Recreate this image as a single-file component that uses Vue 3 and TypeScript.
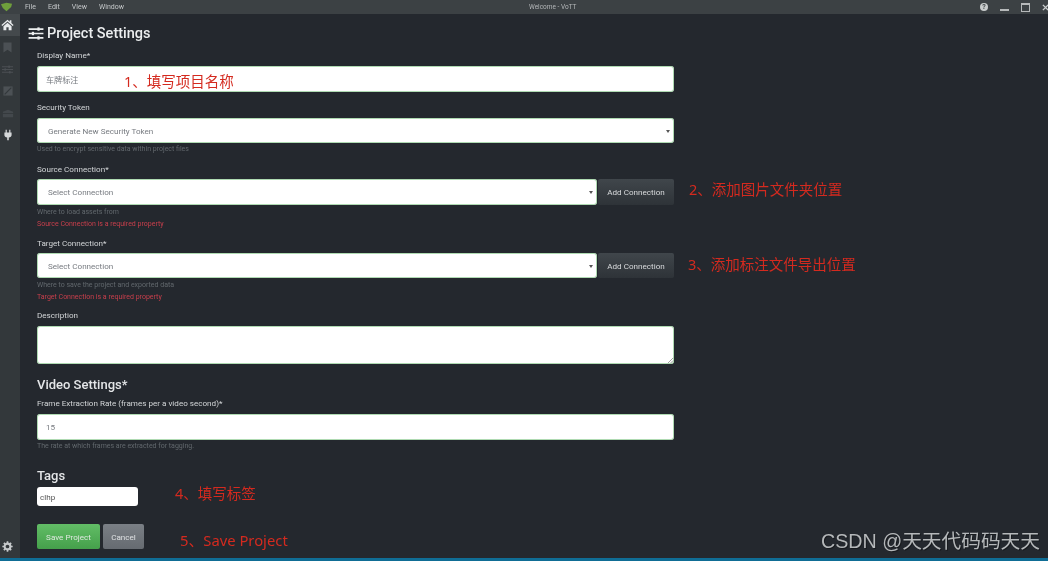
<script setup lang="ts">
const menus = ['File', 'Edit', 'View', 'Window'];

const notes = [
  { text: '1、填写项目名称', left: 124, top: 72, size: 14.5 },
  { text: '2、添加图片文件夹位置', left: 689, top: 180, size: 14.5 },
  { text: '3、添加标注文件导出位置', left: 688, top: 255, size: 14.5 },
  { text: '4、填写标签', left: 175, top: 484, size: 14.5 },
  { text: '5、Save Project', left: 180, top: 531, size: 14.8 },
];
</script>

<template>
  <div class="app">
    <header class="titlebar">
      <svg class="logo" viewBox="0 0 14 10" width="13" height="10">
        <path d="M1 2 L7 0.5 L13 1.5 L12 5 L7 9.5 L3 6 Z" fill="#6f9f3c" />
      </svg>
      <nav class="menus">
        <span v-for="m in menus" :key="m">{{ m }}</span>
      </nav>
      <span class="app-title">Welcome - VoTT</span>
      <div class="win-controls">
        <span class="help-icon">?</span>
        <span class="min"></span>
        <span class="max"></span>
        <svg viewBox="0 0 8 8" width="7" height="7">
          <path d="M1 1 L7 7 M7 1 L1 7" stroke="#c8cbcc" stroke-width="1.6" />
        </svg>
      </div>
    </header>

    <div class="body">
      <aside class="sidebar">
        <div class="nav-item active">
          <svg viewBox="0 0 16 14" width="13" height="12">
            <path d="M8 0.5 L0.5 7 L1.6 8.2 L8 2.7 L14.4 8.2 L15.5 7 L12.8 4.6 V1.2 H10.8 V2.9 Z M3 8.6 V13.5 H6.6 V9.8 H9.4 V13.5 H13 V8.6 L8 4.3 Z" fill="#e8eaeb" />
          </svg>
        </div>
        <div class="nav-item">
          <svg viewBox="0 0 10 12" width="9" height="11">
            <path d="M0.5 0.5 H9.5 V11.5 L5 8.6 L0.5 11.5 Z" fill="#4c5155" />
          </svg>
        </div>
        <div class="nav-item">
          <svg viewBox="0 0 14 10" width="11" height="9">
            <path d="M0 1.5 H14 M0 5 H14 M0 8.5 H14" stroke="#4c5155" stroke-width="1.2" />
            <path d="M9 0 V3 M4 3.5 V6.5 M10 7 V10" stroke="#4c5155" stroke-width="1.6" />
          </svg>
        </div>
        <div class="nav-item">
          <svg viewBox="0 0 12 12" width="10" height="10">
            <path d="M0.5 0.5 H11.5 V11.5 H0.5 Z" fill="#4c5155" />
            <path d="M2 10 L10 2" stroke="#33383b" stroke-width="1.4" />
          </svg>
        </div>
        <div class="nav-item">
          <svg viewBox="0 0 14 10" width="12" height="9">
            <path d="M1 3 L7 0.5 L13 3 V9.5 H1 Z" fill="#43484c" />
            <path d="M1 5 H13" stroke="#33383b" stroke-width="1" />
          </svg>
        </div>
        <div class="nav-item">
          <svg viewBox="0 0 10 14" width="8" height="12">
            <path d="M2 0.5 H3.5 V4 H6.5 V0.5 H8 V4 H9.5 V7 C9.5 9 8 10 6 10.2 V13.5 H4 V10.2 C2 10 0.5 9 0.5 7 V4 H2 Z" fill="#d5d8d9" />
          </svg>
        </div>
        <div class="nav-gear">
          <svg viewBox="0 0 16 16" width="11" height="11">
            <circle cx="8" cy="8" r="4.2" fill="none" stroke="#c6c9cb" stroke-width="3" />
            <path d="M8 0.5 V3.5 M8 12.5 V15.5 M0.5 8 H3.5 M12.5 8 H15.5 M2.7 2.7 L4.8 4.8 M11.2 11.2 L13.3 13.3 M13.3 2.7 L11.2 4.8 M4.8 11.2 L2.7 13.3" stroke="#c6c9cb" stroke-width="2.4" />
          </svg>
        </div>
      </aside>

      <main class="main">
        <h1 class="page-title">
          <svg viewBox="0 0 16 14" width="16" height="13">
            <path d="M0 2.2 H16 M0 7 H16 M0 11.8 H16" stroke="#eceeef" stroke-width="1.8" />
            <rect x="9.5" y="0.4" width="2.4" height="3.6" fill="#eceeef" />
            <rect x="3.5" y="5.2" width="2.4" height="3.6" fill="#eceeef" />
            <rect x="9.5" y="10" width="2.4" height="3.6" fill="#eceeef" />
          </svg>
          Project Settings
        </h1>

        <form class="form" @submit.prevent>
          <label class="label first">Display Name*</label>
          <div class="field valid text cjk">车牌标注</div>

          <label class="label token">Security Token</label>
          <div class="field valid select short">
            Generate New Security Token<span class="caret"></span>
          </div>
          <p class="help">Used to encrypt sensitive data within project files</p>

          <label class="label source">Source Connection*</label>
          <div class="picker">
            <div class="field valid select">Select Connection<span class="caret"></span></div>
            <button type="button" class="add">Add Connection</button>
          </div>
          <p class="help spaced">Where to load assets from</p>
          <p class="error">Source Connection is a required property</p>

          <label class="label target">Target Connection*</label>
          <div class="picker short">
            <div class="field valid select">Select Connection<span class="caret"></span></div>
            <button type="button" class="add">Add Connection</button>
          </div>
          <p class="help spaced">Where to save the project and exported data</p>
          <p class="error">Target Connection is a required property</p>

          <label class="label desc">Description</label>
          <div class="field valid area">
            <svg class="grip" viewBox="0 0 8 8" width="7" height="7">
              <path d="M1 7 L7 1 M4 7 L7 4" stroke="#777" stroke-width="0.8" />
            </svg>
          </div>

          <h2 class="section">Video Settings*</h2>
          <label class="label rate">Frame Extraction Rate (frames per a video second)*</label>
          <div class="field valid text">15</div>
          <p class="help">The rate at which frames are extracted for tagging.</p>

          <h2 class="section tags">Tags</h2>
          <div class="tag-input">clhp</div>

          <div class="actions">
            <button type="button" class="btn save">Save Project</button>
            <button type="button" class="btn cancel">Cancel</button>
          </div>
        </form>
      </main>
    </div>

    <footer class="statusbar"></footer>

    <span
      v-for="n in notes"
      :key="n.text"
      class="note"
      :style="{ left: n.left + 'px', top: n.top + 'px', fontSize: n.size + 'px' }"
    >{{ n.text }}</span>
    <span class="watermark">CSDN @天天代码码天天</span>
  </div>
</template>

<style>
html,
body {
  margin: 0;
  background: #24282f;
}
</style>

<style scoped>
.app {
  position: relative;
  width: 1048px;
  height: 561px;
  display: flex;
  flex-direction: column;
  overflow: hidden;
  background: #24282e;
  color: #e4e6e8;
  font-family: Roboto, "Noto Sans CJK SC", sans-serif;
  filter: blur(0.3px);
}

.titlebar {
  height: 14px;
  flex: none;
  display: flex;
  align-items: center;
  position: relative;
  background: #3c4144;
  font-size: 7px;
  color: #c4c7c9;
}

.logo {
  flex: none;
}

.menus {
  display: flex;
  gap: 12px;
  margin-left: 12px;
}

.app-title {
  position: absolute;
  left: 529px;
  top: 3px;
  font-size: 6.5px;
  color: #b3b6b8;
}

.win-controls {
  margin-left: auto;
  display: flex;
  align-items: center;
  gap: 12px;
  margin-right: -1px;
}

.help-icon {
  width: 8px;
  height: 8px;
  border-radius: 50%;
  background: #c8cbcc;
  color: #3c4144;
  font-size: 7px;
  line-height: 8px;
  font-weight: 700;
  text-align: center;
}

.min {
  width: 9px;
  height: 2px;
  margin-top: 5px;
  background: #b6b9ba;
}

.max {
  width: 7px;
  height: 6px;
  border: 1px solid #b6b9ba;
  border-top-width: 2px;
}

.body {
  flex: 1;
  min-height: 0;
  display: flex;
}

.sidebar {
  width: 20px;
  flex: none;
  display: flex;
  flex-direction: column;
  background: #33383b;
}

.nav-item {
  height: 22px;
  padding-right: 5px;
  display: flex;
  align-items: center;
  justify-content: center;
}

.nav-item.active {
  background: #44494c;
}

.nav-gear {
  margin-top: auto;
  margin-bottom: 6px;
  padding-right: 5px;
  display: flex;
  justify-content: center;
}

.main {
  flex: 1;
  min-width: 0;
  padding-left: 17px;
}

.page-title {
  margin: 10px 0 0 -9px;
  height: 18px;
  display: flex;
  align-items: center;
  gap: 3px;
  font-size: 14.5px;
  font-weight: 500;
  color: #eceeef;
}

.form {
  width: 637px;
  display: flex;
  flex-direction: column;
}

.label {
  height: 11px;
  line-height: 11px;
  margin-top: 9px;
  margin-bottom: 5px;
  font-size: 8.1px;
  color: #d3d6d8;
}

.label.first {
  margin-top: 8px;
  margin-bottom: 5px;
}

.label.token {
  margin-top: 10px;
}

.label.source {
  margin-bottom: 4px;
}

.label.target {
  margin-top: 8px;
  margin-bottom: 4px;
}

.label.desc {
  margin-top: 7px;
}

.label.rate {
  margin-top: 6px;
  margin-bottom: 5px;
}

.field {
  position: relative;
  box-sizing: border-box;
  height: 26px;
  flex: none;
  background: #fff;
  border-radius: 3px;
  display: flex;
  align-items: center;
  color: #777b80;
  font-size: 8.1px;
}

.field.valid {
  box-shadow: inset 0 0 0 1px rgba(109, 187, 114, 0.55);
}

.field.text {
  padding-left: 9px;
}

.field.select {
  padding-left: 11px;
}

.field.short {
  height: 25px;
}

.field.area {
  height: 38px;
}

.caret {
  position: absolute;
  right: 4px;
  top: 50%;
  margin-top: -1px;
  border-left: 2px solid transparent;
  border-right: 2px solid transparent;
  border-top: 3px solid #555;
}

.grip {
  position: absolute;
  right: 0;
  bottom: 0;
}

.picker {
  display: flex;
  height: 26px;
  gap: 1px;
}

.picker.short {
  height: 25px;
}

.picker .field {
  flex: 1;
  height: 100%;
}

.add {
  width: 76px;
  flex: none;
  border: 0;
  padding: 0;
  border-radius: 2px;
  background: linear-gradient(#40464b, #2e3338);
  color: #d8dadc;
  font: inherit;
  font-size: 8.1px;
}

.help,
.error {
  margin: 0;
  height: 12px;
  line-height: 12px;
  font-size: 7px;
}

.help {
  color: #62686d;
}

.help.spaced {
  margin-top: 1px;
}

.error {
  color: #c93f4c;
}

.section {
  margin: 14px 0 0;
  height: 14px;
  line-height: 14px;
  font-size: 13px;
  font-weight: 500;
  color: #e4e6e8;
}

.section.tags {
  margin-top: 17px;
}

.tag-input {
  box-sizing: border-box;
  width: 101px;
  height: 19px;
  margin-top: 4px;
  padding-left: 3px;
  display: flex;
  align-items: center;
  background: #fff;
  border-radius: 3px;
  font-size: 8.1px;
  color: #555;
}

.actions {
  display: flex;
  gap: 3px;
  margin-top: 18px;
}

.btn {
  height: 25px;
  border: 0;
  padding: 0;
  border-radius: 2px;
  font: inherit;
  font-size: 8.1px;
  color: #dfe8df;
}

.save {
  width: 63px;
  background: linear-gradient(#62bd66, #45a04b);
}

.cancel {
  width: 41px;
  background: linear-gradient(#7a7f85, #666b71);
  color: #dfe1e3;
}

.statusbar {
  height: 3px;
  flex: none;
  background: #0f6d95;
}

.note {
  position: absolute;
  white-space: nowrap;
  color: #d42a1f;
  line-height: 18px;
  font-family: "Noto Sans", "Noto Sans CJK SC", sans-serif;
}

.watermark {
  position: absolute;
  right: 8px;
  bottom: 7px;
  font-family: "Liberation Sans", "Noto Sans CJK SC", sans-serif;
  font-size: 19.7px;
  color: #b5b8ba;
  white-space: nowrap;
  text-shadow: 1px 1px 0 rgba(0, 0, 0, 0.35);
}
</style>
